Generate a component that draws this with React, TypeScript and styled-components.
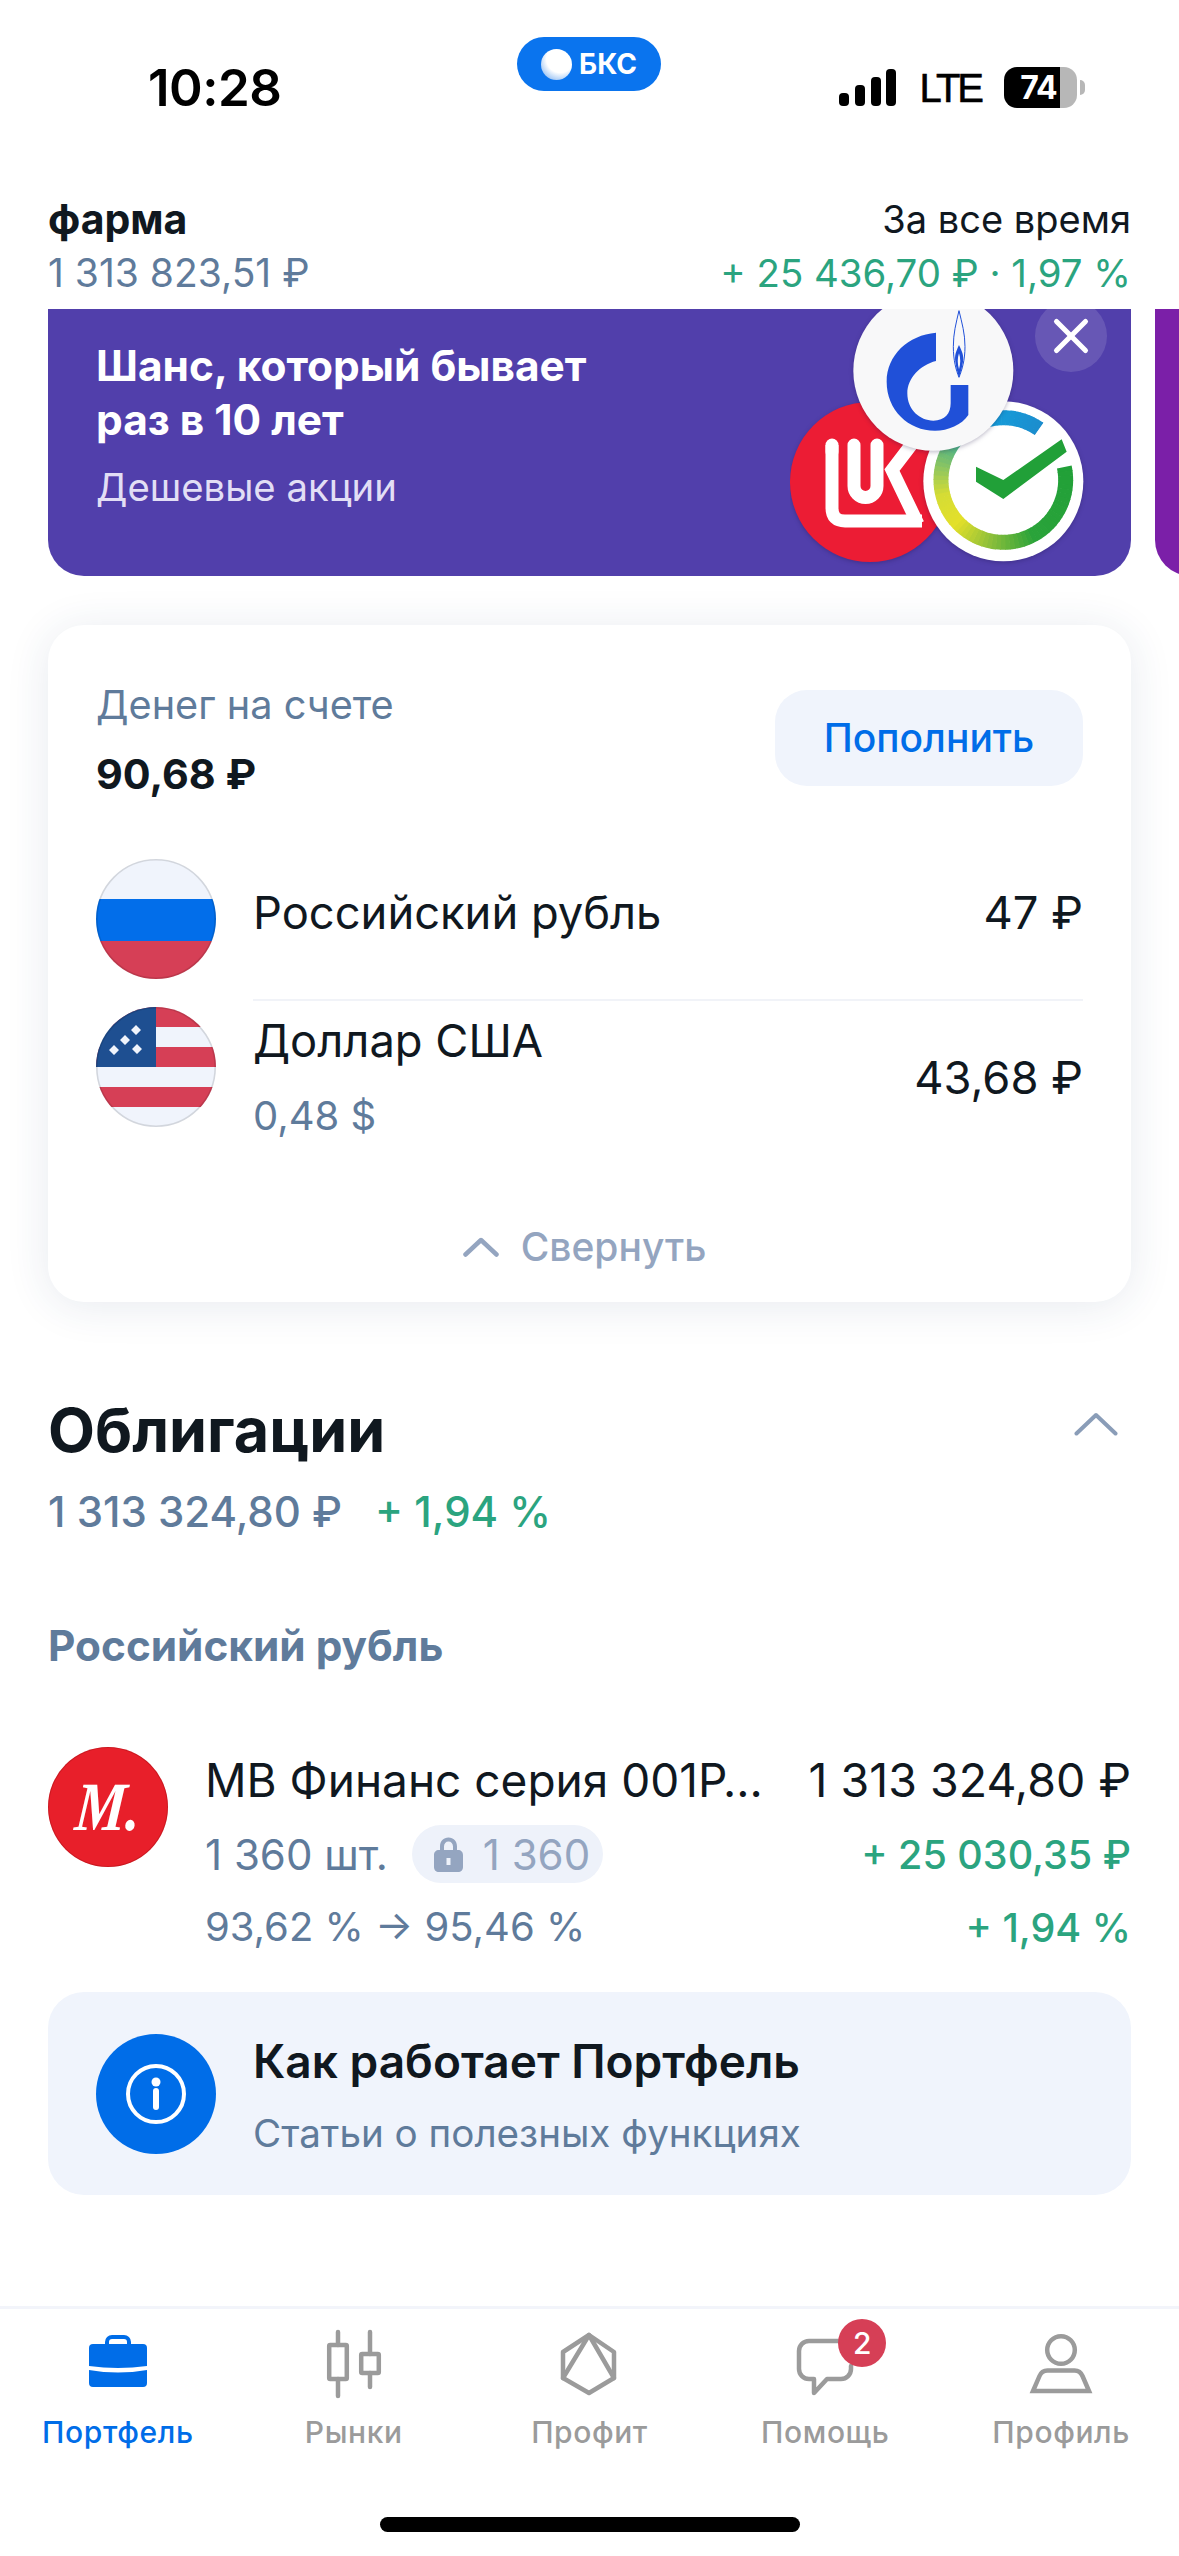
import React, { FC } from "react";
import styled, { createGlobalStyle } from "styled-components";
import { X } from "lucide-react";

const GlobalStyle = createGlobalStyle`
  html, body {
    margin: 0;
    padding: 0;
    background: #fff;
  }
  body {
    font-family: Inter, "Noto Sans", "Liberation Sans", sans-serif;
    color: #10181f;
  }
  * {
    box-sizing: border-box;
  }
`;

const GREEN = "#2ba47f";
const MUTED = "#5f7b9b";
const SOFT = "#94a5c0";
const TAB = "#9b9b9b";
const BLUE = "#006de8";

const lerp = (a: string, b: string, t: number) => {
  const pa = [1, 3, 5].map((i) => parseInt(a.slice(i, i + 2), 16));
  const pb = [1, 3, 5].map((i) => parseInt(b.slice(i, i + 2), 16));
  return `rgb(${pa.map((v, i) => Math.round(v + (pb[i] - v) * t)).join(",")})`;
};

const ringStops: [number, string][] = [
  [78, "#21a038"],
  [150, "#2aa33a"],
  [190, "#8dbf3a"],
  [225, "#e4e02a"],
  [255, "#d4dc35"],
  [285, "#7cc06a"],
  [310, "#3fb394"],
  [340, "#14a0dc"],
  [395, "#1c8ccd"],
];

const ringColor = (deg: number) => {
  for (let i = 0; i < ringStops.length - 1; i++) {
    const [a, ca] = ringStops[i];
    const [b, cb] = ringStops[i + 1];
    if (deg <= b) return lerp(ca, cb, (deg - a) / (b - a));
  }
  return ringStops[ringStops.length - 1][1];
};

const ringPoint = (deg: number) => {
  const r = ((deg - 90) * Math.PI) / 180;
  return `${910 + 187 * Math.cos(r)} ${570 + 187 * Math.sin(r)}`;
};

const SberRing: FC = () => {
  const parts = [];
  for (let d = 78; d < 395; d += 4) {
    const end = Math.min(d + 4.6, 395);
    parts.push(
      <path
        key={d}
        d={`M${ringPoint(d)} A187 187 0 0 1 ${ringPoint(end)}`}
        fill="none"
        stroke={ringColor(d)}
        strokeWidth="45"
      />
    );
  }
  return <>{parts}</>;
};

const App: FC = () => (
  <Page>
    <GlobalStyle />
    <StatusBar>
      <Time>10:28</Time>
      <BrandPill>
        <BrandBall />
        БКС
      </BrandPill>
      <StatusRight>
        <svg width="57" height="37" viewBox="0 0 57 37">
          <rect x="0" y="24" width="10" height="13" rx="4" fill="#000" />
          <rect x="16" y="16" width="10" height="21" rx="4" fill="#000" />
          <rect x="32" y="8" width="10" height="29" rx="4" fill="#000" />
          <rect x="47" y="0" width="10" height="37" rx="4" fill="#000" />
        </svg>
        <Lte>LTE</Lte>
        <Battery>74</Battery>
      </StatusRight>
    </StatusBar>

    <Summary>
      <div>
        <AccountName>фарма</AccountName>
        <SummaryValue>1 313 823,51 ₽</SummaryValue>
      </div>
      <SummaryRight>
        <Period>За все время</Period>
        <SummaryValue $green>+ 25 436,70 ₽ · 1,97 %</SummaryValue>
      </SummaryRight>
    </Summary>

    <BannerStrip>
      <Banner>
        <BannerTitle>
          Шанс, который бывает
          <br />
          раз в 10 лет
        </BannerTitle>
        <BannerSub>Дешевые акции</BannerSub>
        <BannerLogos viewBox="790 309 300 267" width="300" height="267">
          <g transform="translate(700 290) scale(0.33333)">
            <ShadowGroup>
              <circle cx="510" cy="576" r="240" fill="#ec1c34" />
            </ShadowGroup>
          </g>
          <g fill="none" stroke="#fff" strokeWidth="13" strokeLinecap="round">
            <path d="M832 445 V508 Q832 521 845 521 H922" strokeLinecap="butt" />
            <path d="M832 445 V452" />
            <path d="M854 445 V486 A11.5 11.5 0 0 0 877 486 V445" />
            <path d="M918 524 L892 470 L918 436" strokeLinecap="butt" />
          </g>
          <g transform="translate(700 290) scale(0.33333)">
            <ShadowGroup>
              <circle cx="910" cy="574" r="240" fill="#fff" />
            </ShadowGroup>
            <SberRing />
            <path d="M828 530 L910 570 L1085 448 L1100 485 L910 627 L828 575 Z" fill="#21a038" />
            <ShadowGroup>
              <circle cx="700" cy="242" r="240" fill="#f8f8f9" />
            </ShadowGroup>
            <path
              d="M708 128 L708 213 C660 225 622 265 622 310 C622 360 660 392 700 392 C735 392 752 370 752 340 L752 285 L805 285 L805 375 C785 405 745 422 705 422 C625 422 560 360 560 275 C560 195 625 135 708 128 Z"
              fill="#2050d8"
            />
            <path d="M777 62 C768 100 760 130 760 170 C760 210 768 240 777 262 C786 240 795 210 795 170 C795 130 786 100 777 62 Z" fill="none" stroke="#2050d8" strokeWidth="3" />
            <path d="M777 165 C768 185 763 195 766 215 C769 235 773 250 777 262 C781 250 786 235 789 215 C792 195 786 185 777 165 Z" fill="#2050d8" />
            <path d="M777 190 C772 205 772 220 777 238 C782 220 782 205 777 190 Z" fill="#f8f8f9" />
          </g>
        </BannerLogos>
        <CloseButton>
          <X size={58} color="#fff" strokeWidth={2.1} />
        </CloseButton>
      </Banner>
      <NextBanner />
    </BannerStrip>

    <CashCard>
      <CashHead>
        <div>
          <CashLabel>Денег на счете</CashLabel>
          <CashTotal>90,68 ₽</CashTotal>
        </div>
        <TopUpButton>Пополнить</TopUpButton>
      </CashHead>

      <CurrencyRow $first>
        <FlagSvg viewBox="0 0 120 120">
          <clipPath id="ru">
            <circle cx="60" cy="60" r="60" />
          </clipPath>
          <g clipPath="url(#ru)">
            <rect width="120" height="40" fill="#f0f4fc" />
            <rect y="40" width="120" height="42" fill="#026eea" />
            <rect y="82" width="120" height="38" fill="#d63f56" />
          </g>
          <circle cx="60" cy="60" r="59.2" fill="none" stroke="#000" strokeOpacity="0.12" strokeWidth="1.6" />
        </FlagSvg>
        <CurrencyBody>
          <CurrencyText $shift={-12}>
            <CurrencyName>Российский рубль</CurrencyName>
          </CurrencyText>
          <CurrencyValue $shift={-12}>47 ₽</CurrencyValue>
        </CurrencyBody>
      </CurrencyRow>
      <RowDivider />
      <CurrencyRow>
        <FlagSvg viewBox="0 0 120 120">
          <clipPath id="us">
            <circle cx="60" cy="60" r="60" />
          </clipPath>
          <g clipPath="url(#us)">
            <rect width="120" height="120" fill="#f0f4fc" />
            <rect width="120" height="20" fill="#d63f56" />
            <rect y="40" width="120" height="20" fill="#d63f56" />
            <rect y="80" width="120" height="20" fill="#d63f56" />
            <rect width="60" height="60" fill="#1e4f91" />
            <path
              d="M40 18 l5 5 -5 5 -5 -5 Z M29 28 l5 5 -5 5 -5 -5 Z M18 38 l5 5 -5 5 -5 -5 Z M41 37 l5 5 -5 5 -5 -5 Z"
              fill="#f0f4fc"
            />
          </g>
          <circle cx="60" cy="60" r="59.2" fill="none" stroke="#000" strokeOpacity="0.12" strokeWidth="1.6" />
        </FlagSvg>
        <CurrencyBody>
          <CurrencyText $shift={23}>
            <CurrencyName>Доллар США</CurrencyName>
            <CurrencySub>0,48 $</CurrencySub>
          </CurrencyText>
          <CurrencyValue $shift={22}>43,68 ₽</CurrencyValue>
        </CurrencyBody>
      </CurrencyRow>

      <CollapseRow>
        <svg width="36" height="20" viewBox="0 0 36 20">
          <path d="M2.5 17.5 L18 3 L33.5 17.5" fill="none" stroke={SOFT} strokeWidth="4.5" strokeLinecap="round" strokeLinejoin="round" />
        </svg>
        Свернуть
      </CollapseRow>
    </CashCard>

    <Section>
      <SectionHead>
        <SectionTitle>Облигации</SectionTitle>
        <SectionChevron width="44" height="24" viewBox="0 0 44 24">
          <path d="M2.5 21.5 L22 3 L41.5 21.5" fill="none" stroke="#8a9db8" strokeWidth="4" strokeLinecap="round" strokeLinejoin="round" />
        </SectionChevron>
      </SectionHead>
      <SectionStats>
        <span>1 313 324,80 ₽</span>
        <SectionGain>+ 1,94 %</SectionGain>
      </SectionStats>
      <GroupLabel>Российский рубль</GroupLabel>

      <Holding>
        <IssuerLogo>
          <IssuerMark>М.</IssuerMark>
        </IssuerLogo>
        <HoldingGrid>
          <HoldingName>МВ Финанс серия 001Р…</HoldingName>
          <HoldingPrice>1 313 324,80 ₽</HoldingPrice>
          <HoldingCount>
            1 360 шт.
            <LockPill>
              <svg width="29" height="35" viewBox="0 0 29 35">
                <path
                  fillRule="evenodd"
                  d="M6 13 V9.5 C6 4 9.5 0.5 14.5 0.5 C19.5 0.5 23 4 23 9.5 V13 H24 C27 13 29 15 29 18 V30 C29 33 27 35 24 35 H5 C2 35 0 33 0 30 V18 C0 15 2 13 5 13 Z M10 13 H19 V9.5 C19 6.5 17.2 4.5 14.5 4.5 C11.8 4.5 10 6.5 10 9.5 Z M12.5 21 V28 H16.5 V21 Z"
                  fill={SOFT}
                />
              </svg>
              1 360
            </LockPill>
          </HoldingCount>
          <HoldingGain>+ 25 030,35 ₽</HoldingGain>
          <HoldingYield>93,62 % → 95,46 %</HoldingYield>
          <HoldingGain $low>+ 1,94 %</HoldingGain>
        </HoldingGrid>
      </Holding>

      <InfoCard>
        <InfoCircle>
          <svg width="60" height="60" viewBox="0 0 60 60">
            <circle cx="30" cy="30" r="28" fill="none" stroke="#fff" strokeWidth="4" />
            <circle cx="30" cy="18" r="4.5" fill="#fff" />
            <path d="M30 27 V43" stroke="#fff" strokeWidth="6" strokeLinecap="round" />
          </svg>
        </InfoCircle>
        <InfoText>
          <InfoTitle>Как работает Портфель</InfoTitle>
          <InfoSub>Статьи о полезных функциях</InfoSub>
        </InfoText>
      </InfoCard>
    </Section>

    <TabBar>
      <Tabs>
        <Tab $active>
          <TabIcon>
            <svg width="80" height="80" viewBox="0 0 80 80">
              <path d="M15 22 H65 a4 4 0 0 1 4 4 V44 Q40 48 11 44 V26 a4 4 0 0 1 4 -4 Z" fill={BLUE} />
              <path d="M11 48 Q40 53 69 48 V61 a4 4 0 0 1 -4 4 H15 a4 4 0 0 1 -4 -4 Z" fill={BLUE} />
              <path d="M29 23 v-3 a5 5 0 0 1 5 -5 h12 a5 5 0 0 1 5 5 v3" fill="none" stroke={BLUE} strokeWidth="4" />
            </svg>
          </TabIcon>
          Портфель
        </Tab>
        <Tab>
          <TabIcon>
            <svg width="80" height="80" viewBox="0 0 80 80" fill="none" stroke={TAB} strokeWidth="4.5" strokeLinecap="round" strokeLinejoin="round">
              <rect x="15.2" y="23" width="17.6" height="34" rx="1" />
              <path d="M24 10 V23 M24 57 V74" />
              <rect x="47.2" y="32" width="17.6" height="19" rx="1" />
              <path d="M56 10 V32 M56 51 V65" />
            </svg>
          </TabIcon>
          Рынки
        </Tab>
        <Tab>
          <TabIcon>
            <svg width="80" height="80" viewBox="0 0 80 80" fill="none" stroke={TAB} strokeWidth="4.5" strokeLinecap="round" strokeLinejoin="round">
              <path d="M40 13 L65 30 V56 L40 71 L14 56 V30 Z" />
              <path d="M40 13 L14 56 M40 13 L65 56" />
            </svg>
          </TabIcon>
          Профит
        </Tab>
        <Tab>
          <TabIcon>
            <svg width="80" height="80" viewBox="0 0 80 80" fill="none" stroke={TAB} strokeWidth="4.5" strokeLinecap="round" strokeLinejoin="round">
              <path d="M54 19 H24 a10 10 0 0 0 -10 10 V47 a10 10 0 0 0 10 10 H29 V71 L42 57 H56 a10 10 0 0 0 10 -10 V44" />
            </svg>
            <TabBadge>2</TabBadge>
          </TabIcon>
          Помощь
        </Tab>
        <Tab>
          <TabIcon>
            <svg width="80" height="80" viewBox="0 0 80 80" fill="none" stroke={TAB} strokeWidth="4.5">
              <circle cx="40" cy="28" r="13.8" />
              <path d="M12 69 H68 L61.5 54 a9 9 0 0 0 -8 -5.5 H26.5 a9 9 0 0 0 -8 5.5 Z" />
            </svg>
          </TabIcon>
          Профиль
        </Tab>
      </Tabs>
      <HomeIndicator />
    </TabBar>
  </Page>
);

const Page = styled.div`
  width: 1179px;
  height: 2556px;
  display: flex;
  flex-direction: column;
  background: #fff;
  overflow: hidden;
`;

const StatusBar = styled.div`
  height: 196px;
  padding: 37px 94px 0 148px;
  display: grid;
  grid-template-columns: 369px auto 1fr;
  align-items: start;
`;

const Time = styled.div`
  margin-top: 25px;
  font-size: 51px;
  line-height: 52px;
  font-weight: 600;
  color: #000;
  letter-spacing: -0.5px;
`;

const BrandPill = styled.div`
  width: 144px;
  height: 54px;
  border-radius: 27px;
  background: #0a74ee;
  color: #fff;
  display: flex;
  align-items: center;
  justify-content: center;
  gap: 7px;
  font-size: 28px;
  font-weight: 700;
`;

const BrandBall = styled.span`
  width: 31px;
  height: 31px;
  border-radius: 50%;
  background: radial-gradient(circle at 62% 32%, #fff 48%, #a3c8f5 78%);
`;

const StatusRight = styled.div`
  margin-top: 30px;
  justify-self: end;
  display: flex;
  align-items: center;
  gap: 24px;
`;

const Lte = styled.span`
  font-family: "Liberation Sans", sans-serif;
  font-size: 40px;
  line-height: 38px;
  font-weight: 400;
  color: #000;
  letter-spacing: -3px;
  -webkit-text-stroke: 0.6px #000;
`;

const Battery = styled.div`
  position: relative;
  width: 73px;
  height: 41px;
  margin-right: 8px;
  margin-left: -1px;
  padding-right: 4px;
  border-radius: 13px;
  background: linear-gradient(90deg, #000 77%, #b7b7b7 77%);
  color: #fff;
  display: flex;
  align-items: center;
  justify-content: center;
  font-size: 32px;
  font-weight: 700;
  letter-spacing: -1px;
  &::after {
    content: "";
    position: absolute;
    right: -8px;
    top: 13px;
    width: 5px;
    height: 15px;
    border-radius: 0 5px 5px 0;
    background: #b7b7b7;
  }
`;

const Summary = styled.div`
  padding: 0 48px;
  display: flex;
  justify-content: space-between;
  height: 113px;
`;

const AccountName = styled.div`
  font-size: 41px;
  line-height: 46px;
  font-weight: 700;
`;

const SummaryRight = styled.div`
  text-align: right;
`;

const Period = styled.div`
  font-size: 38px;
  line-height: 46px;
  font-weight: 400;
`;

const SummaryValue = styled.div<{ $green?: boolean }>`
  margin-top: 8px;
  font-size: ${(p) => (p.$green ? "38.4px" : "39px")};
  line-height: 46px;
  color: ${(p) => (p.$green ? GREEN : MUTED)};
  white-space: nowrap;
`;

const BannerStrip = styled.div`
  padding-left: 48px;
  display: flex;
  gap: 24px;
  overflow: hidden;
  flex-shrink: 0;
`;

const Banner = styled.div`
  position: relative;
  flex: 0 0 1083px;
  height: 267px;
  padding: 30px 48px 0;
  background: #513fab;
  border-radius: 0 0 36px 36px;
  overflow: hidden;
  color: #fff;
`;

const NextBanner = styled.div`
  flex: 0 0 60px;
  background: #7b1fa8;
  border-radius: 0 0 0 36px;
`;

const BannerTitle = styled.div`
  font-size: 42.4px;
  line-height: 54px;
  font-weight: 700;
`;

const BannerSub = styled.div`
  margin-top: 17px;
  font-size: 38.3px;
  line-height: 46px;
  color: #e2def5;
`;

const BannerLogos = styled.svg`
  position: absolute;
  left: 742px;
  top: 0;
`;

const ShadowGroup = styled.g`
  filter: drop-shadow(0 4px 7px rgba(20, 10, 60, 0.28));
`;

const CloseButton = styled.div`
  position: absolute;
  right: 24px;
  top: -9px;
  width: 72px;
  height: 72px;
  border-radius: 50%;
  background: rgba(255, 255, 255, 0.13);
  display: flex;
  align-items: center;
  justify-content: center;
`;

const CashCard = styled.div`
  margin: 49px 48px 0;
  height: 677px;
  padding: 57px 48px 0;
  border-radius: 36px;
  background: #fff;
  box-shadow: 0 4px 44px rgba(40, 60, 110, 0.11);
  flex-shrink: 0;
`;

const CashHead = styled.div`
  display: flex;
  justify-content: space-between;
  align-items: center;
`;

const CashLabel = styled.div`
  font-size: 39.7px;
  line-height: 46px;
  color: ${MUTED};
`;

const CashTotal = styled.div`
  margin-top: 23px;
  font-size: 41.3px;
  line-height: 46px;
  font-weight: 700;
`;

const TopUpButton = styled.div`
  width: 308px;
  height: 96px;
  margin-bottom: 4px;
  border-radius: 32px;
  background: #f0f4fc;
  color: ${BLUE};
  display: flex;
  align-items: center;
  justify-content: center;
  font-size: 39px;
  font-weight: 500;
`;

const CurrencyRow = styled.div<{ $first?: boolean }>`
  margin-top: ${(p) => (p.$first ? "62px" : "0")};
  display: flex;
  align-items: center;
  gap: 37px;
`;

const FlagSvg = styled.svg`
  width: 120px;
  height: 120px;
  flex-shrink: 0;
`;

const CurrencyBody = styled.div`
  flex: 1;
  display: flex;
  justify-content: space-between;
  align-items: center;
`;

const CurrencyText = styled.div<{ $shift: number }>`
  display: flex;
  flex-direction: column;
  gap: 29px;
  transform: translateY(${(p) => p.$shift / 2}px);
`;

const CurrencyName = styled.div`
  font-size: 45.3px;
  line-height: 46px;
`;

const CurrencySub = styled.div`
  font-size: 40px;
  line-height: 46px;
  color: ${MUTED};
`;

const CurrencyValue = styled.div<{ $shift: number }>`
  font-size: 45.3px;
  line-height: 46px;
  transform: translateY(${(p) => p.$shift / 2}px);
`;

const RowDivider = styled.div`
  margin: 20px 0 5px 157px;
  height: 2px;
  background: #f1f3f8;
`;

const CollapseRow = styled.div`
  margin-top: 97px;
  padding-right: 10px;
  display: flex;
  align-items: center;
  justify-content: center;
  gap: 22px;
  font-size: 39px;
  line-height: 46px;
  font-weight: 500;
  color: ${SOFT};
`;

const Section = styled.div`
  padding: 93px 48px 0;
  flex-shrink: 0;
`;

const SectionHead = styled.div`
  display: flex;
  justify-content: space-between;
  align-items: center;
  padding-right: 13px;
`;

const SectionTitle = styled.div`
  font-size: 61px;
  line-height: 70px;
  font-weight: 700;
`;

const SectionChevron = styled.svg`
  margin-bottom: 12px;
`;

const SectionStats = styled.div`
  margin-top: 22px;
  display: flex;
  gap: 33px;
  font-size: 42px;
  line-height: 50px;
  font-weight: 500;
  color: ${MUTED};
`;

const SectionGain = styled.span`
  color: ${GREEN};
`;

const GroupLabel = styled.div`
  margin-top: 86px;
  font-size: 42.3px;
  line-height: 46px;
  font-weight: 700;
  color: ${MUTED};
`;

const Holding = styled.div`
  margin-top: 78px;
  display: flex;
  gap: 37px;
`;

const IssuerLogo = styled.div`
  width: 120px;
  height: 120px;
  border-radius: 50%;
  background: #e81f2a;
  box-shadow: inset 0 0 0 1px rgba(120, 0, 0, 0.25);
  color: #fff;
  display: flex;
  align-items: center;
  justify-content: center;
  flex-shrink: 0;
`;

const IssuerMark = styled.span`
  display: block;
  font-family: "Liberation Serif", serif;
  font-style: italic;
  font-weight: 700;
  font-size: 60px;
  line-height: 60px;
  transform: scale(0.95, 1.15) skewX(-6deg);
`;

const HoldingGrid = styled.div`
  flex: 1;
  min-width: 0;
  margin-top: 8px;
  display: grid;
  grid-template-columns: minmax(0, 1fr) auto;
  grid-template-rows: 50px 58px 46px;
  column-gap: 20px;
  row-gap: 20px;
  align-items: center;
`;

const HoldingName = styled.div`
  font-size: 46px;
  line-height: 50px;
  white-space: nowrap;
`;

const HoldingPrice = styled.div`
  font-size: 46.5px;
  line-height: 50px;
  text-align: right;
  white-space: nowrap;
`;

const HoldingCount = styled.div`
  display: flex;
  align-items: center;
  gap: 24px;
  font-size: 42px;
  color: ${MUTED};
  white-space: nowrap;
`;

const LockPill = styled.span`
  height: 58px;
  padding: 0 13px 0 22px;
  border-radius: 29px;
  background: #eef2fa;
  color: ${SOFT};
  display: flex;
  align-items: center;
  gap: 20px;
`;

const HoldingGain = styled.div<{ $low?: boolean }>`
  font-size: 39.5px;
  line-height: 46px;
  padding-top: ${(p) => (p.$low ? "3px" : "1px")};
  font-weight: 500;
  text-align: right;
  color: ${GREEN};
  white-space: nowrap;
`;

const HoldingYield = styled.div`
  font-size: 40px;
  color: ${MUTED};
  white-space: nowrap;
`;

const InfoCard = styled.div`
  margin-top: 43px;
  height: 203px;
  padding: 0 48px;
  border-radius: 36px;
  background: #f0f4fc;
  display: flex;
  align-items: center;
  gap: 37px;
`;

const InfoCircle = styled.div`
  width: 120px;
  height: 120px;
  border-radius: 50%;
  background: ${BLUE};
  display: flex;
  align-items: center;
  justify-content: center;
  flex-shrink: 0;
`;

const InfoText = styled.div`
  display: flex;
  flex-direction: column;
  gap: 23px;
  padding-top: 4px;
`;

const InfoTitle = styled.div`
  font-size: 46px;
  line-height: 52px;
  font-weight: 600;
`;

const InfoSub = styled.div`
  font-size: 38.6px;
  line-height: 46px;
  color: ${MUTED};
`;

const TabBar = styled.div`
  margin-top: auto;
  height: 250px;
  border-top: 3px solid #f2f4fa;
  flex-shrink: 0;
`;

const Tabs = styled.div`
  display: grid;
  grid-template-columns: repeat(5, 1fr);
  padding-top: 13px;
`;

const Tab = styled.div<{ $active?: boolean }>`
  display: flex;
  flex-direction: column;
  align-items: center;
  font-size: 30px;
  line-height: 40px;
  font-weight: 500;
  letter-spacing: 0.6px;
  color: ${(p) => (p.$active ? BLUE : TAB)};
`;

const TabIcon = styled.div`
  position: relative;
  width: 80px;
  height: 80px;
  margin-bottom: 10px;
`;

const TabBadge = styled.span`
  position: absolute;
  left: 53px;
  top: -3px;
  width: 48px;
  height: 48px;
  border-radius: 50%;
  background: #d63f56;
  color: #fff;
  display: flex;
  align-items: center;
  justify-content: center;
  font-size: 30px;
  font-weight: 500;
  letter-spacing: 0;
`;

const HomeIndicator = styled.div`
  width: 420px;
  height: 15px;
  margin: 65px auto 0;
  border-radius: 8px;
  background: #000;
`;

export default App;
